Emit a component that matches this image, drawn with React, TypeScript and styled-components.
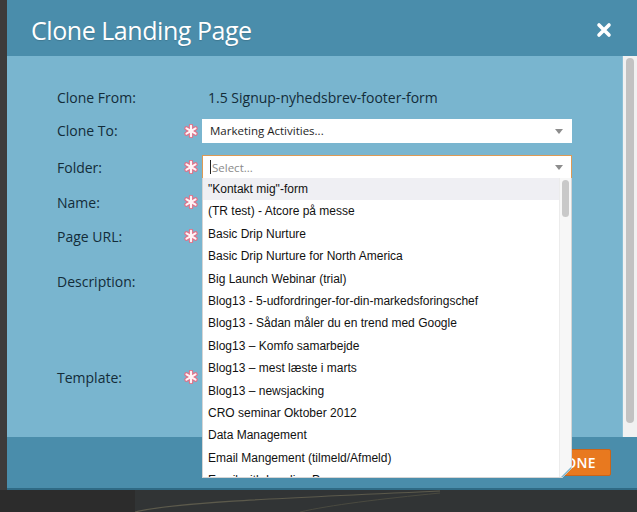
import { createGlobalStyle, styled } from "styled-components";

const GlobalStyle = createGlobalStyle`
  html, body {
    margin: 0;
    padding: 0;
    background: #343535;
  }

  #root {
    width: 637px;
    height: 512px;
    overflow: hidden;
  }
`;

const Screen = styled.div`
  display: flex;
  flex-direction: column;
  width: 637px;
  height: 512px;
  background: #313435;
`;

const Stage = styled.div`
  display: flex;
  height: 490px;
`;

const LeftEdge = styled.div`
  width: 7px;
  background: #3d3b3b;
`;

const Dialog = styled.div`
  flex: 1;
  display: flex;
  flex-direction: column;
  font-family: "Open Sans", sans-serif;
  border-bottom: 2px solid #2f6a85;
`;

const Header = styled.div`
  height: 56px;
  flex-shrink: 0;
  display: flex;
  align-items: center;
  justify-content: space-between;
  padding: 4px 24px 0 24px;
  box-sizing: border-box;
  background: #4a8dab;
`;

const Title = styled.h1`
  margin: 0;
  color: #ffffff;
  font-size: 25px;
  font-weight: 400;
  letter-spacing: -0.45px;
  text-shadow: 0 1px 1px rgba(0, 0, 0, 0.15);
`;

const CloseButton = styled.button`
  width: 18px;
  height: 18px;
  padding: 0;
  border: none;
  background: none;
  display: flex;
  align-items: center;
  justify-content: center;
`;

const Body = styled.div`
  flex: 1;
  display: flex;
`;

const Content = styled.div`
  flex: 1;
  position: relative;
  padding: 25px 0 0 50px;
  background: #79b5cf;
  border-right: 1px solid #8cc0d6;
`;

const Track = styled.div`
  width: 14px;
  padding: 2px 0 12px;
  box-sizing: border-box;
  display: flex;
  justify-content: center;
  background: #f1f1f1;
`;

const Thumb = styled.div`
  width: 8px;
  border-radius: 4px;
  background: #c2c2c2;
`;

const Row = styled.div<{ $h: number; $top?: boolean }>`
  height: ${(p) => p.$h}px;
  display: grid;
  grid-template-columns: 126px 19px 370px;
  align-items: ${(p) => (p.$top ? "start" : "center")};
  padding-top: ${(p) => (p.$top ? 17 : 0)}px;
  box-sizing: border-box;
`;

const Label = styled.span`
  color: #132c39;
  font-size: 14px;
  line-height: 19px;
`;

const Value = styled.span`
  padding-left: 6px;
  color: #132c39;
  font-size: 14px;
  line-height: 19px;
`;

const Star = styled.svg`
  width: 14px;
  height: 14px;
  margin-left: 1px;
`;

const Field = styled.div<{ $focus?: boolean }>`
  position: relative;
  height: 24px;
  display: flex;
  align-items: center;
  padding: 0 8px 0 7px;
  box-sizing: border-box;
  background: #ffffff;
  border: 1px solid ${(p) => (p.$focus ? "#dd9a55" : "#ffffff")};
  font-size: 11.5px;
  color: ${(p) => (p.$focus ? "#8a8a8a" : "#1e1e1e")};
`;

const Caret = styled.span`
  width: 1px;
  height: 14px;
  margin-right: 1px;
  background: #222;
`;

const Arrow = styled.span`
  position: absolute;
  right: 8px;
  top: 50%;
  margin-top: -2px;
  border-left: 4px solid transparent;
  border-right: 4px solid transparent;
  border-top: 5px solid #8d8d8d;
`;

const Menu = styled.div`
  position: absolute;
  top: 100%;
  left: -1px;
  right: -1px;
  height: 300px;
  z-index: 10;
  display: flex;
  background: #ffffff;
  border: 1px solid #d5d5d5;
  border-top: none;
  box-sizing: border-box;
  overflow: hidden;
  clip-path: polygon(0 0, 100% 0, 100% calc(100% - 10px), calc(100% - 10px) 100%, 0 100%);

  &::after {
    content: "";
    position: absolute;
    right: 0;
    bottom: 0;
    border-left: 10px solid transparent;
    border-bottom: 10px solid #7fb3cb;
  }
`;

const MenuList = styled.ul`
  flex: 1;
  margin: 0;
  padding: 0;
  list-style: none;
`;

const MenuItem = styled.li<{ $active?: boolean }>`
  height: 22.4px;
  line-height: 22.4px;
  padding-left: 5px;
  font-family: "Liberation Sans", Arial, sans-serif;
  font-size: 12px;
  color: #111111;
  white-space: nowrap;
  background: ${(p) => (p.$active ? "#efeff3" : "transparent")};
`;

const MenuTrack = styled.div`
  width: 12px;
  padding: 2px 2px 0;
  box-sizing: border-box;
  background: #f7f7f7;
  border-left: 1px solid #ececec;
`;

const MenuThumb = styled.div`
  height: 37px;
  border-radius: 4px;
  background: #c9c9c9;
`;

const Footer = styled.div`
  height: 51px;
  flex-shrink: 0;
  display: flex;
  align-items: center;
  justify-content: flex-end;
  padding-right: 26px;
  background: #4a8dab;
`;

const PrimaryButton = styled.button`
  width: 78px;
  height: 27px;
  border: 1px solid #c9651a;
  border-radius: 2px;
  background: #e8791f;
  color: #ffffff;
  font-family: "Open Sans", sans-serif;
  font-size: 14px;
  font-weight: 600;
  letter-spacing: 0.2px;
`;

const Backdrop = styled.svg`
  display: block;
  width: 637px;
  height: 22px;
`;

const folders = [
  "\"Kontakt mig\"-form",
  "(TR test) - Atcore på messe",
  "Basic Drip Nurture",
  "Basic Drip Nurture for North America",
  "Big Launch Webinar (trial)",
  "Blog13 - 5-udfordringer-for-din-markedsforingschef",
  "Blog13 - Sådan måler du en trend med Google",
  "Blog13 – Komfo samarbejde",
  "Blog13 – mest læste i marts",
  "Blog13 – newsjacking",
  "CRO seminar Oktober 2012",
  "Data Management",
  "Email Mangement (tilmeld/Afmeld)",
  "Email with Landing Page",
];

const Required = () => (
  <Star viewBox="0 0 14 14">
    <g stroke="#e07088" strokeWidth="4.4" strokeLinecap="round">
      <line x1="7" y1="1.8" x2="7" y2="12.2" />
      <line x1="2.5" y1="4.4" x2="11.5" y2="9.6" />
      <line x1="2.5" y1="9.6" x2="11.5" y2="4.4" />
    </g>
    <g stroke="#fff4f6" strokeWidth="2.2" strokeLinecap="round">
      <line x1="7" y1="1.8" x2="7" y2="12.2" />
      <line x1="2.5" y1="4.4" x2="11.5" y2="9.6" />
      <line x1="2.5" y1="9.6" x2="11.5" y2="4.4" />
    </g>
  </Star>
);

const App = () => {
  return (
    <>
      <GlobalStyle />
      <Screen>
        <Stage>
          <LeftEdge />
          <Dialog>
            <Header>
              <Title>Clone Landing Page</Title>
              <CloseButton>
                <svg width="16" height="16" viewBox="0 0 16 16">
                  <path
                    d="M3 3 L13 13 M13 3 L3 13"
                    stroke="#ffffff"
                    strokeWidth="3.6"
                    strokeLinecap="round"
                  />
                </svg>
              </CloseButton>
            </Header>
            <Body>
              <Content>
                <Row $h={33}>
                  <Label>Clone From:</Label>
                  <span />
                  <Value>1.5 Signup-nyhedsbrev-footer-form</Value>
                </Row>
                <Row $h={33}>
                  <Label>Clone To:</Label>
                  <Required />
                  <Field>
                    Marketing Activities...
                    <Arrow />
                  </Field>
                </Row>
                <Row $h={40}>
                  <Label>Folder:</Label>
                  <Required />
                  <Field $focus>
                    <Caret />
                    Select...
                    <Arrow />
                    <Menu>
                      <MenuList>
                        {folders.map((name, i) => (
                          <MenuItem key={name} $active={i === 0}>
                            {name}
                          </MenuItem>
                        ))}
                      </MenuList>
                      <MenuTrack>
                        <MenuThumb />
                      </MenuTrack>
                    </Menu>
                  </Field>
                </Row>
                <Row $h={30}>
                  <Label>Name:</Label>
                  <Required />
                  <Field />
                </Row>
                <Row $h={38}>
                  <Label>Page URL:</Label>
                  <Required />
                  <Field />
                </Row>
                <Row $h={105} $top>
                  <Label>Description:</Label>
                  <span />
                  <span />
                </Row>
                <Row $h={34}>
                  <Label>Template:</Label>
                  <Required />
                  <Field />
                </Row>
              </Content>
              <Track>
                <Thumb style={{ height: 365 }} />
              </Track>
            </Body>
            <Footer>
              <PrimaryButton>CLONE</PrimaryButton>
            </Footer>
          </Dialog>
        </Stage>
        <Backdrop viewBox="0 0 637 22">
          <rect x="0" y="0" width="135" height="22" fill="#2c2c2c" />
          <path d="M135 22 C 170 13, 260 9, 440 1" stroke="#5c5a4c" strokeWidth="1.2" fill="none" />
          <path d="M300 22 C 330 15, 380 9, 440 3" stroke="#4a4a40" strokeWidth="1" fill="none" />
        </Backdrop>
      </Screen>
    </>
  );
};

export default App;
